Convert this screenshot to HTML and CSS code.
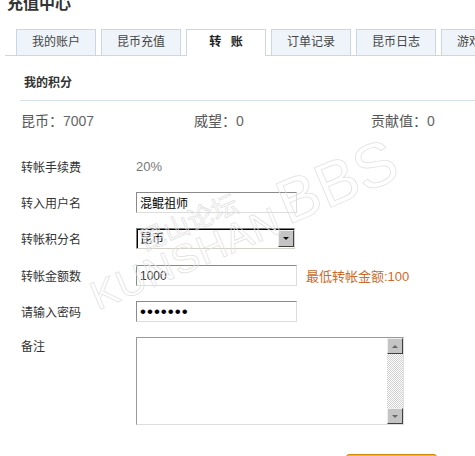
FILE: index.html
```html
<!DOCTYPE html>
<html lang="zh-CN">
<head>
    <meta charset="UTF-8">
    <meta name="viewport" content="width=device-width, initial-scale=1.0">
    <title>充值中心 - 转账</title>
    <link rel="stylesheet" href="styles.css">
</head>
<body>
    <div class="page">
        <h1 class="title">充值中心</h1>
        <ul class="tabs">
            <li class="tab">我的账户</li>
            <li class="tab">昆币充值</li>
            <li class="tab tab-active">转 账</li>
            <li class="tab">订单记录</li>
            <li class="tab">昆币日志</li>
            <li class="tab">游戏充值</li>
        </ul>

        <div class="section-head">我的积分</div>
        <div class="stats">
            <div class="stat">昆币：<span>7007</span></div>
            <div class="stat">威望：<span>0</span></div>
            <div class="stat">贡献值：<span>0</span></div>
        </div>

        <form class="form">
            <div class="row">
                <label>转帐手续费</label>
                <span class="fee">20%</span>
            </div>
            <div class="row">
                <label for="to_user">转入用户名</label>
                <input type="text" id="to_user" class="field" value="混鲲祖师">
            </div>
            <div class="row row-select">
                <label for="credit">转帐积分名</label>
                <div class="select">
                    <select id="credit">
                        <option>昆币</option>
                    </select>
                    <span class="select-btn"><i class="arrow-down"></i></span>
                </div>
            </div>
            <div class="row">
                <label for="amount">转帐金额数</label>
                <input type="text" id="amount" class="field field-num" value="1000">
                <span class="hint">最低转帐金额:100</span>
            </div>
            <div class="row">
                <label for="pwd">请输入密码</label>
                <input type="password" id="pwd" class="field field-pwd" value="1234567">
            </div>
            <div class="row row-note">
                <label for="note">备注</label>
                <div class="note-box">
                    <textarea id="note"></textarea>
                    <div class="scrollbar">
                        <span class="sb-btn"><i class="arrow-up"></i></span>
                        <span class="sb-track"></span>
                        <span class="sb-btn"><i class="arrow-down"></i></span>
                    </div>
                </div>
            </div>
            <button type="button" class="submit" aria-label="确定转帐"></button>
        </form>

        <!-- forum watermark over the screenshot -->
        <div class="watermark">
            <div class="wm-main">
                <span class="wm-cn">昆山论坛</span>
                <span class="wm-en">KUNSHAN</span>
            </div>
            <span class="wm-bbs">BBS</span>
        </div>
    </div>
</body>
</html>
```

FILE: styles.css
```css
html, body {
    margin: 0;
    overflow: hidden;
}

body {
    font-family: "Liberation Sans", "Noto Sans CJK SC", sans-serif;
    font-size: 12px;
    color: #333;
    background: #fff;
}

.page {
    position: relative;
    width: 475px;
    height: 456px;
    overflow: hidden;
}

.title {
    margin: -6px 0 0 7px;
    font-size: 16px;
    line-height: 20px;
    font-weight: bold;
    color: #333;
}

.tabs {
    display: flex;
    align-items: flex-end;
    gap: 5px;
    list-style: none;
    margin: 15px 0 0 5px;
    padding: 0 0 0 11px;
    border-bottom: 1px solid #c9d9e4;
}

.tab {
    flex-shrink: 0;
    width: 78px;
    height: 25px;
    line-height: 25px;
    text-align: center;
    color: #444;
    background: #eef4f9;
    border: 1px solid #c9d9e4;
    border-bottom: none;
}

.tab-active {
    height: 26px;
    margin-bottom: -1px;
    background: #fff;
    font-weight: bold;
    color: #222;
    word-spacing: 6px;
}

.section-head {
    margin: 17px 0 0 20px;
    padding: 0 0 7px 4px;
    line-height: 20px;
    font-weight: bold;
    color: #333;
    border-bottom: 1px solid #d6e2ea;
}

.stats {
    display: grid;
    grid-template-columns: 173px 177px 1fr;
    padding: 10px 0 0 21px;
    font-size: 14px;
    line-height: 20px;
    color: #555;
}

.stats span {
    color: #666;
}

.form {
    margin-top: 25px;
    padding-left: 21px;
}

.row {
    display: flex;
    align-items: center;
    height: 21px;
    margin-bottom: 15px;
}

.row label {
    flex-shrink: 0;
    width: 115px;
    color: #333;
}

.row-select {
    margin-bottom: 16px;
}

.fee {
    font-size: 13px;
    color: #777;
}

.field {
    box-sizing: border-box;
    width: 161px;
    height: 21px;
    margin: 0;
    padding: 0 3px;
    font-family: inherit;
    font-size: 12px;
    color: #000;
    border: 1px solid #ddd;
    border-top-color: #8a8a8a;
    border-left-color: #8a8a8a;
    outline: none;
}

.field-num {
    color: #333;
}

.field-pwd {
    font-size: 17px;
    letter-spacing: 1px;
}

.hint {
    margin-left: 9px;
    font-size: 13px;
    color: #cc6a2a;
}

.select {
    box-sizing: border-box;
    display: flex;
    width: 159px;
    height: 21px;
    border: 1px solid #d4d0c8;
    border-top-color: #808080;
    border-left-color: #808080;
    box-shadow: inset 1px 1px 0 #000;
    padding: 1px 0 0 1px;
}

.select select {
    flex: 1;
    min-width: 0;
    appearance: none;
    border: none;
    background: #fff;
    padding: 0 2px;
    font-family: inherit;
    font-size: 12px;
    color: #000;
    outline: none;
}

.select-btn,
.sb-btn {
    box-sizing: border-box;
    display: flex;
    align-items: center;
    justify-content: center;
    width: 16px;
    background: #c4c4c4;
    border: 1px solid #404040;
    border-top-color: #efefef;
    border-left-color: #efefef;
}

.select-btn {
    height: 17px;
}

.arrow-down,
.arrow-up {
    width: 0;
    height: 0;
    border-left: 3px solid transparent;
    border-right: 3px solid transparent;
}

.arrow-down {
    border-top: 3px solid #111;
}

.arrow-up {
    border-bottom: 3px solid #666;
}

.sb-btn .arrow-down {
    border-top-color: #666;
}

.row-note {
    align-items: flex-start;
    height: 88px;
    margin-bottom: 0;
}

.row-note label {
    line-height: 20px;
}

.note-box {
    box-sizing: border-box;
    display: flex;
    width: 268px;
    height: 88px;
    border: 1px solid #ddd;
    border-top-color: #999;
    border-left-color: #999;
}

.note-box textarea {
    flex: 1;
    border: none;
    resize: none;
    overflow: hidden;
    outline: none;
    font-family: inherit;
    font-size: 12px;
}

.scrollbar {
    display: flex;
    flex-direction: column;
    width: 16px;
}

.sb-btn {
    height: 16px;
}

.sb-track {
    flex: 1;
    background: repeating-conic-gradient(#cfcfcf 0 25%, #fff 0 50%) 0 0 / 2px 2px;
}

.submit {
    display: block;
    width: 91px;
    height: 28px;
    margin: 29px 0 0 325px;
    padding: 0;
    background: linear-gradient(#fbb233, #f39c12);
    border: 1px solid #d38a0c;
    border-radius: 3px;
}

.watermark {
    position: absolute;
    left: 100px;
    top: 252px;
    display: flex;
    align-items: flex-end;
    font-family: "Liberation Sans", "Noto Sans CJK SC", sans-serif;
    line-height: 1;
    color: transparent;
    -webkit-text-stroke: 0.7px #e0e0e0;
    transform: rotate(-23deg);
    transform-origin: 0 100%;
    pointer-events: none;
}

.wm-main {
    display: flex;
    flex-direction: column;
}

.wm-cn {
    margin: 0 0 -2px 66px;
    font-size: 26px;
}

.wm-en {
    font-size: 40px;
    letter-spacing: 1px;
}

.wm-bbs {
    margin-left: 6px;
    font-size: 62px;
}
```
